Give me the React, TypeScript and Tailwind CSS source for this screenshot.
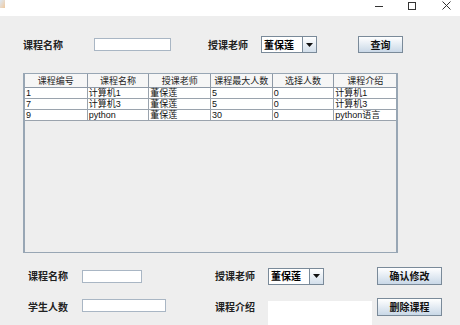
import React from "react";

const font = { fontFamily: '"Noto Sans CJK SC", "Noto Sans", sans-serif' };
const tableFont = { fontFamily: '"Liberation Sans", "Noto Sans CJK SC", sans-serif' };

function TextField({ w }: { w: string }) {
  return <div className={`${w} h-[13px] shrink-0 bg-white border border-[#a9b6c4]`} />;
}

function Combo({ w }: { w: string }) {
  return (
    <div className={`${w} h-[17px] shrink-0 flex border border-[#7a8a99] bg-white`}>
      <div className="flex-1 flex items-center pl-[2px] text-[10px] font-bold text-black leading-none">董保莲</div>
      <div className="w-[14px] border-l border-[#7a8a99] bg-gradient-to-b from-white to-[#d3dfeb] flex items-center justify-center">
        <svg width="7" height="4" viewBox="0 0 7 4"><path d="M0 0H7L3.5 4Z" fill="#111" /></svg>
      </div>
    </div>
  );
}

function Btn({ w, h, children }: { w: string; h: string; children: React.ReactNode }) {
  return (
    <div className={`${w} ${h} shrink-0 flex items-center justify-center border border-[#7a8a99] bg-gradient-to-b from-white to-[#c9d8e7] text-[10px] font-bold text-[#111] leading-none`}>
      {children}
    </div>
  );
}

const cols = [63, 62, 62, 62, 62, 62];
const headers = ["课程编号", "课程名称", "授课老师", "课程最大人数", "选择人数", "课程介绍"];
const rows = [
  ["1", "计算机1", "董保莲", "5", "0", "计算机1"],
  ["7", "计算机3", "董保莲", "5", "0", "计算机3"],
  ["9", "python", "董保莲", "30", "0", "python语言"],
];

export default function App() {
  return (
    <div className="w-[460px] h-[325px] overflow-hidden bg-[#eeeeee] flex flex-col" style={font}>
      {/* title bar */}
      <div className="h-[16px] shrink-0 bg-white flex items-start relative">
        <div className="w-[5px] h-[8px] bg-gradient-to-br from-[#cfe0f0] to-[#e8b070] opacity-70" />
        <div className="ml-auto flex items-start">
          <svg width="8" height="8" viewBox="0 0 8 8" className="mt-[1px] mr-[25px]"><path d="M0 5.5H8" stroke="#333" strokeWidth="1" /></svg>
          <svg width="8" height="8" viewBox="0 0 8 8" className="mt-[2px] mr-[26px]"><rect x="0.5" y="0.5" width="7" height="7" fill="none" stroke="#333" strokeWidth="1" /></svg>
          <svg width="9" height="9" viewBox="0 0 9 9" className="mt-[1px] mr-[9px]"><path d="M0.5 0.5L8.5 8.5M8.5 0.5L0.5 8.5" stroke="#333" strokeWidth="1" /></svg>
        </div>
      </div>

      {/* top query row */}
      <div className="mt-[20px] h-[17px] flex items-center pl-[23px] shrink-0">
        <div className="w-[71px] text-[10px] font-bold text-[#222] leading-none">课程名称</div>
        <TextField w="w-[77px]" />
        <div className="ml-[37px] w-[53px] text-[10px] font-bold text-[#222] leading-none">授课老师</div>
        <Combo w="w-[56px]" />
        <div className="ml-[41px]"><Btn w="w-[45px]" h="h-[17px]">查询</Btn></div>
      </div>

      {/* table */}
      <div className="mt-[20px] ml-[23px] w-[375px] h-[180px] shrink-0 border-2 border-[#98a6b4] border-t border-b bg-[#eeeeee] flex flex-col" style={tableFont}>
        <div className="flex h-[14px] shrink-0 bg-[#f6f6f6] border-b border-[#8e99a6]">
          {headers.map((h, i) => (
            <div key={i} style={{ width: cols[i] }} className={`flex items-center justify-center text-[9px] text-[#222] leading-[10px] ${i < 5 ? "border-r border-[#8e99a6]" : ""}`}>
              {h}
            </div>
          ))}
        </div>
        {rows.map((r, ri) => (
          <div key={ri} className="flex h-[11px] shrink-0 bg-white border-b border-[#9aa3ad]">
            {r.map((c, ci) => (
              <div key={ci} style={{ width: cols[ci] }} className={`flex items-center pl-[1px] text-[9px] text-[#111] leading-[10px] ${ci < 5 ? "border-r border-[#9aa3ad]" : ""}`}>
                {c}
              </div>
            ))}
          </div>
        ))}
      </div>

      {/* bottom row 1 */}
      <div className="mt-[14px] h-[18px] flex items-center pl-[28px] shrink-0">
        <div className="w-[54px] text-[10px] font-bold text-[#222] leading-none">课程名称</div>
        <TextField w="w-[60px]" />
        <div className="ml-[73px] w-[53px] text-[10px] font-bold text-[#222] leading-none">授课老师</div>
        <Combo w="w-[56px]" />
        <div className="ml-[53px]"><Btn w="w-[65px]" h="h-[18px]">确认修改</Btn></div>
      </div>

      {/* bottom row 2 */}
      <div className="mt-[13px] h-[30px] flex items-start pl-[28px] shrink-0">
        <div className="w-[54px] h-[18px] flex items-center text-[10px] font-bold text-[#222] leading-none">学生人数</div>
        <div className="mt-[1px]"><TextField w="w-[84px]" /></div>
        <div className="ml-[49px] w-[53px] h-[18px] flex items-center text-[10px] font-bold text-[#222] leading-none">课程介绍</div>
        <div className="mt-[3px] w-[104px] h-[30px] bg-white" />
        <div className="ml-[5px]"><Btn w="w-[65px]" h="h-[18px]">删除课程</Btn></div>
      </div>
    </div>
  );
}
